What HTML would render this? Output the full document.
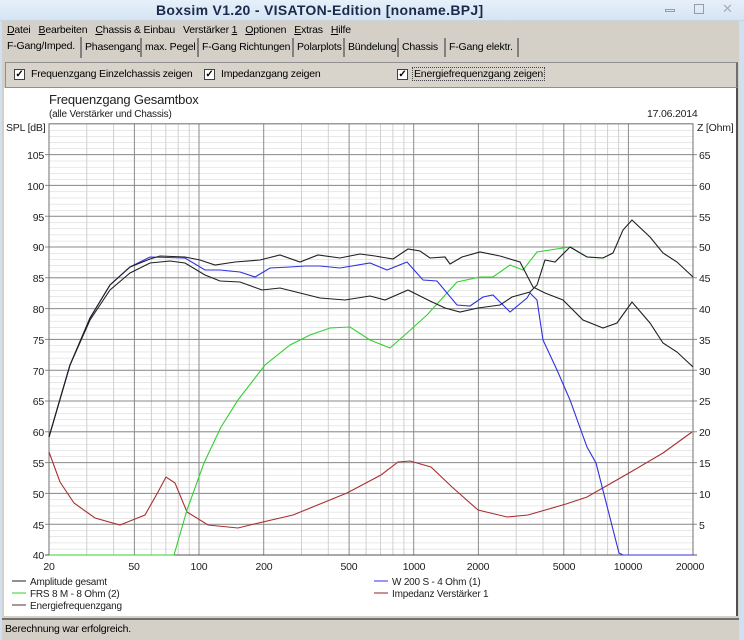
<!DOCTYPE html>
<html><head><meta charset="utf-8"><style>
*{margin:0;padding:0;box-sizing:border-box}
body{width:744px;height:640px;overflow:hidden;background:#d4d0c8;font-family:"Liberation Sans",Tahoma,sans-serif;font-size:10.5px;letter-spacing:-0.2px;color:#000;position:relative}
.abs{position:absolute;white-space:nowrap}
#title{left:0;top:0;width:744px;height:21px;background:linear-gradient(#e6f0fa,#d6e4f3);border-bottom:1px solid #c8d4e0}
#title .t{left:156px;top:2px;font-size:14px;font-weight:bold;color:#1a2a4a;letter-spacing:0.3px}
#menu span{margin-right:8px}
.tab{position:absolute;top:38px;height:19px;line-height:18px;padding:0 3px;border-right:2px solid #808080;white-space:nowrap;overflow:hidden}
#panel{left:5px;top:62px;width:733px;height:26px;border:1px solid #909090;border-right:2px solid #707070;background:#d8d4cc}
.cb{position:absolute;top:6px;width:11px;height:11px;border:1px solid #404040;background:#fff;font-size:10px;line-height:9px;text-align:center;font-weight:bold}
#chart{left:4px;top:88px;width:734px;height:528px;background:#fff;border-right:2px solid #505050}
#status{left:0;top:618px;width:744px;height:22px;background:#d4d0c8;border-top:2px solid #707070}
</style></head><body>
<div id="title" class="abs"><div class="abs t">Boxsim V1.20 - VISATON-Edition [noname.BPJ]</div>
<div class="abs" style="left:665px;top:9px;width:10px;height:3px;border:1px solid #99a;"></div>
<div class="abs" style="left:694px;top:4px;width:10px;height:10px;border:1px solid #99a;"></div>
<div class="abs" style="left:722px;top:1px;color:#aab;font-size:13px">✕</div></div>
<div id="menu" class="abs" style="left:7px;top:24px"><span><u>D</u>atei</span><span><u>B</u>earbeiten</span><span><u>C</u>hassis &amp; Einbau</span><span>Verstärker <u>1</u></span><span><u>O</u>ptionen</span><span><u>E</u>xtras</span><span><u>H</u>ilfe</span></div>
<div class="tab" style="left:4px;width:78px;background:#d4d0c8;top:37px;height:21px">F-Gang/Imped.</div>
<div class="tab" style="left:82px;width:60px">Phasengang</div>
<div class="tab" style="left:142px;width:57px">max. Pegel</div>
<div class="tab" style="left:199px;width:95px">F-Gang Richtungen</div>
<div class="tab" style="left:294px;width:51px">Polarplots</div>
<div class="tab" style="left:345px;width:54px">Bündelung</div>
<div class="tab" style="left:399px;width:47px">Chassis</div>
<div class="tab" style="left:446px;width:73px">F-Gang elektr.</div>
<div id="panel" class="abs">
<div class="cb" style="left:8px">✓</div><div class="abs" style="left:25px;top:5px">Frequenzgang Einzelchassis zeigen</div>
<div class="cb" style="left:198px">✓</div><div class="abs" style="left:215px;top:5px">Impedanzgang zeigen</div>
<div class="cb" style="left:391px">✓</div><div class="abs" style="left:406px;top:4px;border:1px dotted #444;padding:0 1px">Energiefrequenzgang zeigen</div>
</div>
<div id="chart" class="abs"></div>
<svg class="abs" style="left:0;top:0;letter-spacing:-0.2px" width="744" height="640" font-family="Liberation Sans, sans-serif" font-size="10.5">
<defs><pattern id="hm" x="0" y="123.8" width="10" height="6.16" patternUnits="userSpaceOnUse"><line x1="0" y1="0" x2="10" y2="0" stroke="#d0d0d0" stroke-width="1"/></pattern></defs>
<rect x="49" y="123.8" width="644" height="431.2" fill="url(#hm)"/>
<g stroke="#d0d0d0">
<line x1="86.8" y1="124" x2="86.8" y2="555"/><line x1="113.6" y1="124" x2="113.6" y2="555"/><line x1="151.4" y1="124" x2="151.4" y2="555"/><line x1="165.8" y1="124" x2="165.8" y2="555"/><line x1="178.2" y1="124" x2="178.2" y2="555"/><line x1="189.2" y1="124" x2="189.2" y2="555"/>
<line x1="301.5" y1="124" x2="301.5" y2="555"/><line x1="328.3" y1="124" x2="328.3" y2="555"/><line x1="366.1" y1="124" x2="366.1" y2="555"/><line x1="380.5" y1="124" x2="380.5" y2="555"/><line x1="392.9" y1="124" x2="392.9" y2="555"/><line x1="403.9" y1="124" x2="403.9" y2="555"/>
<line x1="516.2" y1="124" x2="516.2" y2="555"/><line x1="543" y1="124" x2="543" y2="555"/><line x1="580.8" y1="124" x2="580.8" y2="555"/><line x1="595.2" y1="124" x2="595.2" y2="555"/><line x1="607.6" y1="124" x2="607.6" y2="555"/><line x1="618.6" y1="124" x2="618.6" y2="555"/>
</g>
<g stroke="#8a8a8a">
<line x1="134.4" y1="124" x2="134.4" y2="555"/><line x1="199" y1="124" x2="199" y2="555"/><line x1="263.7" y1="124" x2="263.7" y2="555"/><line x1="349.1" y1="124" x2="349.1" y2="555"/><line x1="413.7" y1="124" x2="413.7" y2="555"/><line x1="478.4" y1="124" x2="478.4" y2="555"/><line x1="563.8" y1="124" x2="563.8" y2="555"/><line x1="628.4" y1="124" x2="628.4" y2="555"/>
<line x1="45" y1="154.6" x2="697" y2="154.6"/><line x1="45" y1="185.4" x2="697" y2="185.4"/><line x1="45" y1="216.2" x2="697" y2="216.2"/><line x1="45" y1="247" x2="697" y2="247"/><line x1="45" y1="277.8" x2="697" y2="277.8"/><line x1="45" y1="308.6" x2="697" y2="308.6"/><line x1="45" y1="339.4" x2="697" y2="339.4"/><line x1="45" y1="370.2" x2="697" y2="370.2"/><line x1="45" y1="401" x2="697" y2="401"/><line x1="45" y1="431.8" x2="697" y2="431.8"/><line x1="45" y1="462.6" x2="697" y2="462.6"/><line x1="45" y1="493.4" x2="697" y2="493.4"/><line x1="45" y1="524.2" x2="697" y2="524.2"/>
</g>
<rect x="49" y="123.8" width="644" height="431.2" fill="none" stroke="#707070"/>
<line x1="45" y1="555" x2="697" y2="555" stroke="#505050"/>
<g fill="none" stroke-width="1.1">
<polyline stroke="#a83030" points="49,452 60,482 74,503 95,518 120,525 145,515 158,492 166,477 175,483 187,512 208,525 238,528 250,525 293,515 347,493 381,475 398,462 410,461 431,467 452,487 478,510 507,517 528,515 566,504 587,497 629,473 663,453 692,432"/>
<polyline stroke="#30d030" points="49,555 174,555 187,510 204,463 221,427 238,400 265,365 290,345 310,335 330,328 350,327 370,340 390,348 407,333 427,315 457,282 480,277 493,277 510,265 523,270 537,252 550,250 570,247 587,257 603,258 613,253"/>
<polyline stroke="#3030e0" points="49,437 70,365 90,318 110,285 130,267 150,257 185,258 205,270 220,270 240,272 255,277 270,268 290,267 305,266 320,266 340,268 370,263 387,270 407,262 423,280 437,281 457,305 470,306 483,297 493,295 510,312 527,298 530,293 537,300 543,340 557,370 570,400 587,447 596,463 619,553 623,555 693,555"/>
<polyline stroke="#202020" points="49,437 70,365 90,320 110,290 130,273 150,263 170,261 185,263 205,275 220,281 240,282 262,290 280,288 300,293 320,298 345,300 370,296 385,300 408,290 430,301 445,308 460,312 478,308 500,305 512,297 530,292 537,285 545,260 555,262 570,247 587,257 603,258 613,253 623,230 632,220 650,237 663,253 677,262 693,277"/>
<polyline stroke="#202020" points="49,437 70,365 90,318 110,285 130,267 150,259 160,256 185,257 200,260 215,265 235,262 260,260 280,255 300,262 318,255 340,258 360,254 375,256 393,259 408,249 420,251 430,258 445,257 450,264 462,257 480,252 500,256 520,262 533,287 545,293 563,300 583,320 603,328 617,323 632,302 650,323 663,343 677,352 693,367"/>
</g>
<g fill="#202020">
<text x="49" y="104" font-size="13">Frequenzgang Gesamtbox</text>
<text x="49" y="117" font-size="10">(alle Verstärker und Chassis)</text>
<text x="647" y="117">17.06.2014</text>
<text x="6" y="131">SPL [dB]</text>
<text x="697" y="131">Z [Ohm]</text>
</g>
<g fill="#202020" text-anchor="end">
<text x="44" y="159">105</text><text x="44" y="190">100</text><text x="44" y="221">95</text><text x="44" y="251">90</text><text x="44" y="282">85</text><text x="44" y="313">80</text><text x="44" y="344">75</text><text x="44" y="375">70</text><text x="44" y="405">65</text><text x="44" y="436">60</text><text x="44" y="467">55</text><text x="44" y="498">50</text><text x="44" y="529">45</text><text x="44" y="559">40</text>
</g>
<g fill="#202020">
<text x="699" y="159">65</text><text x="699" y="190">60</text><text x="699" y="221">55</text><text x="699" y="251">50</text><text x="699" y="282">45</text><text x="699" y="313">40</text><text x="699" y="344">35</text><text x="699" y="375">30</text><text x="699" y="405">25</text><text x="699" y="436">20</text><text x="699" y="467">15</text><text x="699" y="498">10</text><text x="699" y="529">5</text>
</g>
<g fill="#202020" text-anchor="middle">
<text x="49" y="570">20</text><text x="134" y="570">50</text><text x="199" y="570">100</text><text x="264" y="570">200</text><text x="349" y="570">500</text><text x="414" y="570">1000</text><text x="478" y="570">2000</text><text x="564" y="570">5000</text><text x="628" y="570">10000</text><text x="690" y="570">20000</text>
</g>
<g font-size="10" fill="#202020">
<line x1="12" y1="581" x2="26" y2="581" stroke="#202020"/><text x="30" y="585">Amplitude gesamt</text>
<line x1="12" y1="593" x2="26" y2="593" stroke="#30d030"/><text x="30" y="597">FRS 8 M - 8 Ohm (2)</text>
<line x1="12" y1="605" x2="26" y2="605" stroke="#503030"/><text x="30" y="609">Energiefrequenzgang</text>
<line x1="374" y1="581" x2="388" y2="581" stroke="#3030e0"/><text x="392" y="585">W 200 S - 4 Ohm (1)</text>
<line x1="374" y1="593" x2="388" y2="593" stroke="#902020"/><text x="392" y="597">Impedanz Verstärker 1</text>
</g>
</svg>
<div id="status" class="abs"><div class="abs" style="left:5px;top:3px">Berechnung war erfolgreich.</div></div>
<div class="abs" style="left:739px;top:21px;width:5px;height:619px;background:#cfe0f2"></div>
<div class="abs" style="left:0;top:21px;width:2px;height:619px;background:#cfe0f2"></div>
</body></html>
